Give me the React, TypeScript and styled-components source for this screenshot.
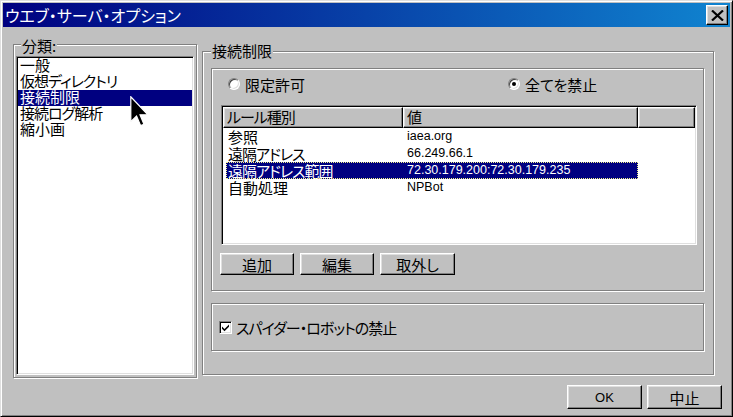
import styled, { createGlobalStyle } from 'styled-components';

const GlobalStyle = createGlobalStyle`
  html, body {
    margin: 0;
    padding: 0;
    background: #c0c0c0;
  }
  * {
    box-sizing: border-box;
  }
`;

const Window = styled.div`
  position: relative;
  display: flex;
  flex-direction: column;
  width: 733px;
  height: 417px;
  padding: 2px;
  border: 1px solid;
  border-color: #dfdfdf #000 #000 #dfdfdf;
  box-shadow:
    inset 1px 1px #fff,
    inset -1px -1px #808080;
  background: #c0c0c0;
  color: #000;
  font-family: 'Noto Sans CJK JP', 'Liberation Sans', sans-serif;
  font-size: 15px;
  font-feature-settings: 'palt';
  overflow: hidden;
`;

const TitleBar = styled.div`
  display: flex;
  height: 24px;
  align-items: center;
  justify-content: space-between;
  padding: 0 2px;
  background: linear-gradient(to right, #000080, #1084d0);
`;

const Title = styled.div`
  color: #fff;
  font-size: 16px;
  line-height: 22px;
`;

const Raised = styled.div`
  border: 1px solid;
  border-color: #fff #000 #000 #fff;
  box-shadow:
    inset -1px -1px #808080,
    inset 1px 1px #dfdfdf;
  background: #c0c0c0;
`;

const CloseButton = styled(Raised)`
  display: grid;
  width: 22px;
  height: 20px;
  place-items: center;
`;

const Body = styled.div`
  display: flex;
  flex: 1;
  flex-direction: column;
  padding: 17px 8px 0 10px;
`;

const Main = styled.div`
  display: flex;
  align-items: flex-start;
  gap: 5px;
`;

const Etched = styled.div`
  position: relative;
  border: 1px solid #808080;
  box-shadow:
    inset 1px 1px #fff,
    1px 1px #fff;
`;

const Legend = styled.span<{ $top: number; $left: number }>`
  position: absolute;
  top: ${({ $top }) => $top}px;
  left: ${({ $left }) => $left}px;
  padding: 0 1px;
  background: #c0c0c0;
  line-height: 16px;
`;

/* kana in the bitmap UI font run narrower than in Noto */
const Kana = styled.span`
  letter-spacing: -1px;
`;

const CategoryGroup = styled(Etched)`
  width: 184px;
  height: 334px;
  padding: 11px 2px 2px;
`;

const Sunken = styled.div`
  padding: 1px;
  border: 1px solid;
  border-color: #808080 #fff #fff #808080;
  box-shadow:
    inset 1px 1px #000,
    inset -1px -1px #dfdfdf;
  background: #fff;
`;

const ListBox = styled(Sunken)`
  height: 100%;
`;

const ListItem = styled.div<{ $selected?: boolean }>`
  height: 16px;
  padding-left: 2px;
  background: ${({ $selected }) => ($selected ? '#000080' : 'transparent')};
  color: ${({ $selected }) => ($selected ? '#fff' : '#000')};
  line-height: 14px;
  white-space: nowrap;
`;

const RestrictGroup = styled(Etched)`
  display: flex;
  width: 512px;
  height: 324px;
  flex-direction: column;
  gap: 12px;
  margin-top: 7px;
  padding: 16px 0 0 8px;
`;

const RuleBox = styled(Etched)`
  display: flex;
  width: 493px;
  height: 223px;
  flex-direction: column;
  padding: 7px 0 0 9px;
`;

const RadioRow = styled.div`
  display: flex;
  height: 16px;
  align-items: center;
  padding-left: 7px;
`;

const RadioItem = styled.label<{ $width?: number }>`
  display: flex;
  width: ${({ $width }) => ($width ? `${$width}px` : 'auto')};
  align-items: center;
  gap: 5px;
  line-height: 15px;
`;

const RadioCircle = styled.span<{ $checked?: boolean }>`
  display: grid;
  width: 12px;
  height: 12px;
  place-items: center;
  border: 1px solid;
  border-color: #808080 #fff #fff #808080;
  border-radius: 50%;
  box-shadow:
    inset 1px 1px #404040,
    inset -1px -1px #dfdfdf;
  background: #fff;

  &::after {
    content: '';
    display: ${({ $checked }) => ($checked ? 'block' : 'none')};
    width: 4px;
    height: 4px;
    border-radius: 50%;
    background: #000;
  }
`;

const ListView = styled(Sunken)`
  width: 476px;
  height: 140px;
  margin-top: 13px;
`;

const HeaderRow = styled.div`
  display: flex;
  height: 21px;
`;

const HeaderCell = styled(Raised)<{ $width?: number }>`
  width: ${({ $width }) => ($width ? `${$width}px` : 'auto')};
  flex: ${({ $width }) => ($width ? 'none' : '1')};
  padding-left: 3px;
  line-height: 17px;
  white-space: nowrap;
`;

const RuleRow = styled.div<{ $selected?: boolean }>`
  display: flex;
  width: 412px;
  height: 17px;
  align-items: center;
  margin-left: 3px;
  background: ${({ $selected }) => ($selected ? '#000080' : 'transparent')};
  color: ${({ $selected }) => ($selected ? '#fff' : '#000')};
  outline: ${({ $selected }) => ($selected ? '1px dotted #f4f48a' : 'none')};
  outline-offset: -1px;
`;

const RuleCell = styled.div<{ $width: number; $latin?: boolean }>`
  width: ${({ $width }) => $width}px;
  padding-left: ${({ $latin }) => ($latin ? 4 : 2)}px;
  font-family: ${({ $latin }) =>
    $latin ? "'Liberation Sans', sans-serif" : 'inherit'};
  font-size: ${({ $latin }) => ($latin ? '12.5px' : '15px')};
  line-height: ${({ $latin }) => ($latin ? '15px' : '13px')};
  white-space: nowrap;
`;

const ButtonRow = styled.div`
  display: flex;
  gap: 6px;
  margin: 8px 0 0 -1px;
`;

const PushButton = styled(Raised).attrs({ as: 'button' })<{
  $width: number;
  $height: number;
  $latin?: boolean;
}>`
  width: ${({ $width }) => $width}px;
  height: ${({ $height }) => $height}px;
  padding: 0;
  color: #000;
  font-family: ${({ $latin }) =>
    $latin ? "'Liberation Sans', sans-serif" : 'inherit'};
  font-size: ${({ $latin }) => ($latin ? '13px' : '15px')};
  font-feature-settings: 'palt';
  line-height: 1;
`;

const SpiderBox = styled(Etched)`
  display: flex;
  width: 493px;
  height: 48px;
  align-items: center;
  gap: 4px;
  padding-left: 7px;
  line-height: 15px;
`;

const CheckBox = styled(Sunken)`
  display: grid;
  width: 13px;
  height: 13px;
  place-items: center;
  padding: 0;
`;

const Footer = styled.div`
  display: flex;
  justify-content: flex-end;
  gap: 5px;
  margin-top: 7px;
`;

const Cursor = styled.svg`
  position: absolute;
  top: 95px;
  left: 129px;
  width: 19px;
  height: 31px;
`;

const categories = [
  { label: '一般' },
  { label: '仮想ディレクトリ', kana: true },
  { label: '接続制限', selected: true },
  { label: '接続ログ解析', kana: true },
  { label: '縮小画' },
];

const rules = [
  { type: '参照', value: 'iaea.org' },
  { type: '遠隔アドレス', value: '66.249.66.1', kana: true },
  { type: '遠隔アドレス範囲', value: '72.30.179.200:72.30.179.235', kana: true, selected: true },
  { type: '自動処理', value: 'NPBot' },
];

export default function App() {
  return (
    <>
      <GlobalStyle />
      <Window>
        <TitleBar>
          <Title>ウエブ・サーバ・オプション</Title>
          <CloseButton>
            <svg width="13" height="11" viewBox="0 0 13 11">
              <path d="M1 0.5 L12 10.5 M12 0.5 L1 10.5" stroke="#000" strokeWidth="2.2" />
            </svg>
          </CloseButton>
        </TitleBar>
        <Body>
          <Main>
            <CategoryGroup>
              <Legend $top={-7} $left={7}>
                分類:
              </Legend>
              <ListBox>
                {categories.map((c) => (
                  <ListItem key={c.label} $selected={c.selected}>
                    {c.kana ? <Kana>{c.label}</Kana> : c.label}
                  </ListItem>
                ))}
              </ListBox>
            </CategoryGroup>
            <RestrictGroup>
              <Legend $top={-9} $left={8}>
                接続制限
              </Legend>
              <RuleBox>
                <RadioRow>
                  <RadioItem $width={280}>
                    <RadioCircle />
                    限定許可
                  </RadioItem>
                  <RadioItem>
                    <RadioCircle $checked />
                    全てを禁止
                  </RadioItem>
                </RadioRow>
                <ListView>
                  <HeaderRow>
                    <HeaderCell $width={180}>
                      <Kana>ルール種別</Kana>
                    </HeaderCell>
                    <HeaderCell $width={235}>値</HeaderCell>
                    <HeaderCell />
                  </HeaderRow>
                  {rules.map((r) => (
                    <RuleRow key={r.type} $selected={r.selected}>
                      <RuleCell $width={177}>
                        {r.kana ? <Kana>{r.type}</Kana> : r.type}
                      </RuleCell>
                      <RuleCell $width={235} $latin>
                        {r.value}
                      </RuleCell>
                    </RuleRow>
                  ))}
                </ListView>
                <ButtonRow>
                  <PushButton $width={74} $height={22}>
                    追加
                  </PushButton>
                  <PushButton $width={74} $height={22}>
                    編集
                  </PushButton>
                  <PushButton $width={75} $height={22}>
                    取外し
                  </PushButton>
                </ButtonRow>
              </RuleBox>
              <SpiderBox>
                <CheckBox>
                  <svg width="9" height="9" viewBox="0 0 9 9">
                    <path d="M1 3.5 L3.5 6 L8 1.5 L8 3.8 L3.5 8.3 L1 5.8 Z" fill="#000" />
                  </svg>
                </CheckBox>
                <Kana>スパイダー・ロボットの禁止</Kana>
              </SpiderBox>
            </RestrictGroup>
          </Main>
          <Footer>
            <PushButton $width={75} $height={24} $latin>
              OK
            </PushButton>
            <PushButton $width={75} $height={24}>
              中止
            </PushButton>
          </Footer>
        </Body>
        <Cursor viewBox="0 0 12.5 20.5">
          <path
            d="M0.5 0.5 L0.5 17 L4.3 13.2 L7 19.6 L9.2 18.7 L6.6 12.4 L11.8 12.4 Z"
            fill="#000"
            stroke="#fff"
            strokeWidth="0.8"
            strokeLinejoin="miter"
          />
        </Cursor>
      </Window>
    </>
  );
}
